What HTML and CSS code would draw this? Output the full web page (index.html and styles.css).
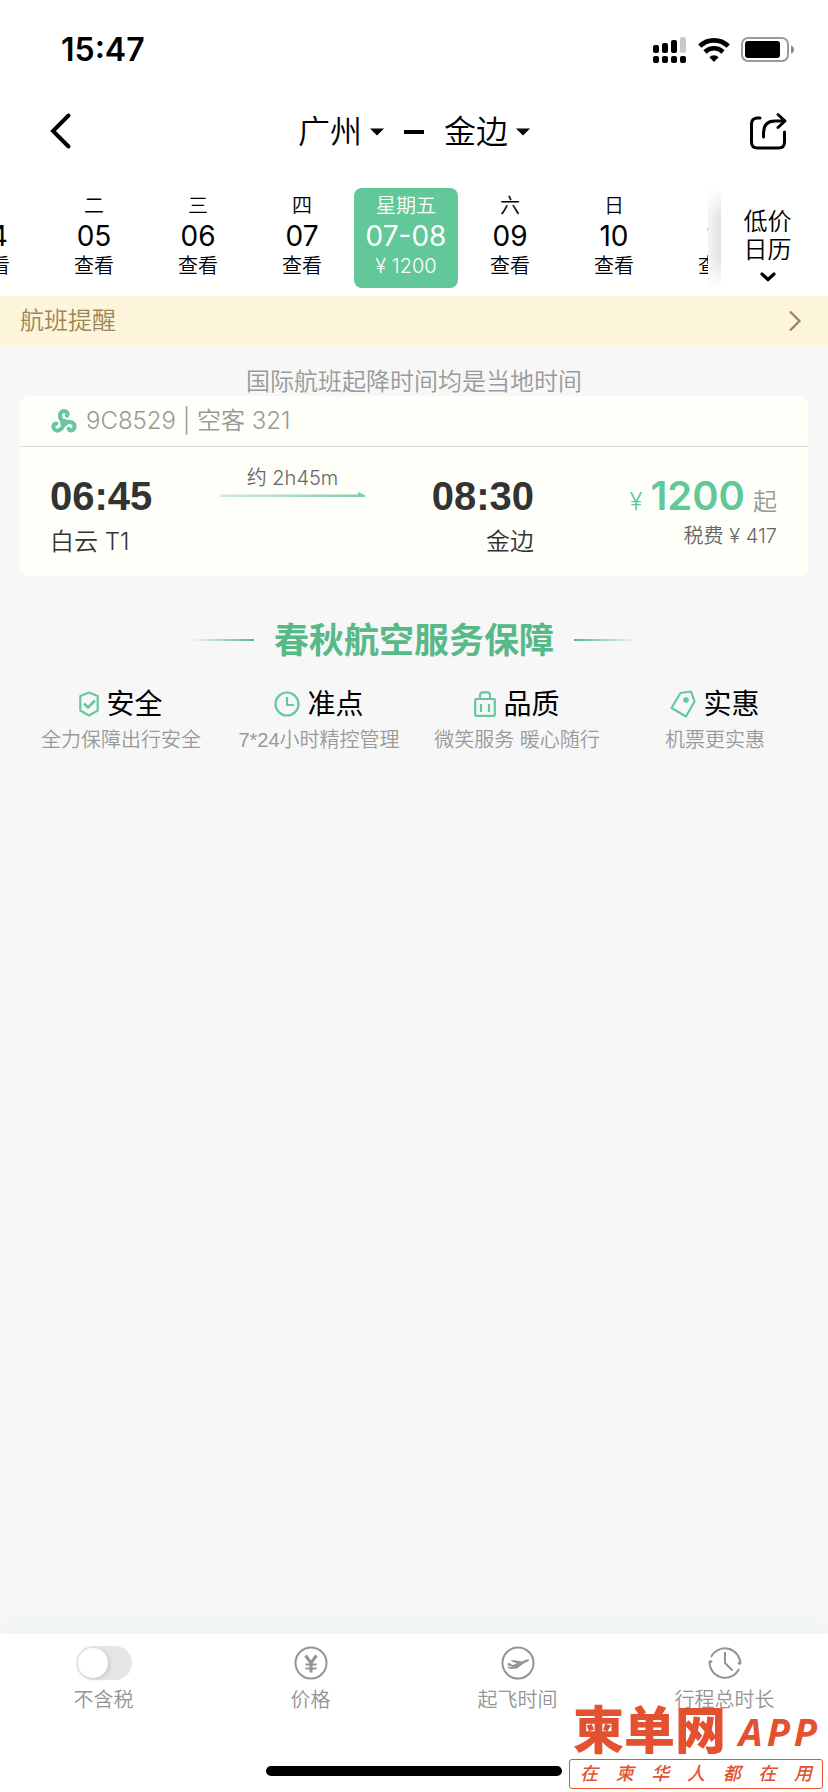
FILE: index.html
```html
<!DOCTYPE html>
<html lang="zh-CN">
<head>
<meta charset="utf-8">
<meta name="viewport" content="width=device-width, initial-scale=1">
<title>广州 - 金边</title>
<link rel="stylesheet" href="styles.css">
</head>
<body>
<div class="page">
  <div class="status">
    <span class="clock">15:47</span>
    <div class="status-icons">
      <svg width="34" height="26" viewBox="0 0 34 26">
        <rect x="0" y="8" width="6" height="8" rx="2"/><rect x="9" y="6" width="6" height="10" rx="2"/><rect x="18" y="3" width="6" height="13" rx="2"/><rect x="27" y="0" width="6" height="16" rx="2" fill="#c9c9c9"/>
        <rect x="0" y="19" width="6" height="7" rx="2"/><rect x="9" y="19" width="6" height="7" rx="2"/><rect x="18" y="19" width="6" height="7" rx="2"/><rect x="27" y="19" width="6" height="7" rx="2"/>
      </svg>
      <svg width="32" height="24" viewBox="0 0 32 24">
        <g fill="none" stroke="#000" stroke-width="4.6"><path d="M1.8 8.2a20.2 20.2 0 0 1 28.4 0"/><path d="M7 14a12.8 12.8 0 0 1 18 0"/></g>
        <path d="M16 24l-4.6-4.8a6.6 6.6 0 0 1 9.200 0z"/>
      </svg>
      <svg width="54" height="25" viewBox="0 0 54 25">
        <rect x="1" y="1" width="46" height="23" rx="6" fill="#fff" stroke="#9a9a9a" stroke-width="2"/>
        <rect x="4" y="4" width="35" height="17" rx="3"/>
        <path d="M50 8.500q3 1 3 4t-3 4z" fill="#8a8a8a"/>
      </svg>
    </div>
  </div>

  <header class="nav">
    <button class="icon-btn back" aria-label="返回">
      <svg width="21" height="36" viewBox="0 0 21 36"><path d="M18.500 2.500L3 18l15.500 15.500" fill="none" stroke="#000" stroke-width="4" stroke-linecap="round"/></svg>
    </button>
    <div class="route">
      <button class="city">广州<svg width="14" height="8" viewBox="0 0 14 8"><path d="M0 0.500h14L7 7.500z"/></svg></button>
      <span class="dash"></span>
      <button class="city">金边<svg width="14" height="8" viewBox="0 0 14 8"><path d="M0 0.500h14L7 7.500z"/></svg></button>
    </div>
    <button class="icon-btn share" aria-label="分享">
      <svg width="38" height="38" viewBox="0 0 38 38" fill="none" stroke="#000" stroke-width="3" stroke-linecap="round" stroke-linejoin="round"><path d="M11 6H8Q2.500 6.500 2.500 12v18q0 6 6 6h21q6 0 6-6V20"/><path d="M14.500 25V21Q14.500 9 26 9h9M29 2.500L36 9l-7 6.500"/></svg>
    </button>
  </header>

  <div class="dates">
    <div class="strip">
      <button class="day"><span>一</span><b>04</b><span>查看</span></button>
      <button class="day"><span>二</span><b>05</b><span>查看</span></button>
      <button class="day"><span>三</span><b>06</b><span>查看</span></button>
      <button class="day"><span>四</span><b>07</b><span>查看</span></button>
      <button class="day selected"><span>星期五</span><b>07-08</b><span>¥ 1200</span></button>
      <button class="day"><span>六</span><b>09</b><span>查看</span></button>
      <button class="day"><span>日</span><b>10</b><span>查看</span></button>
      <button class="day"><span></span><b>11</b><span>查看</span></button>
    </div>
    <div class="edge"></div>
    <button class="calendar">
      <span>低价<br>日历</span>
      <svg width="16" height="10" viewBox="0 0 16 10"><path d="M2 2l6 5.500L14 2" fill="none" stroke="#000" stroke-width="3.200" stroke-linecap="round"/></svg>
    </button>
  </div>

  <a class="alert" href="#">航班提醒
    <svg width="13" height="22" viewBox="0 0 13 22"><path d="M2 1.500l9.500 9.500L2 20.500" fill="none" stroke="#9d8454" stroke-width="2.200"/></svg>
  </a>

  <main>
    <p class="tip">国际航班起降时间均是当地时间</p>
    <article class="flight">
      <div class="flight-head">
        <svg width="24" height="24" viewBox="0 0 28 28">
          <circle cx="14" cy="16" r="4.500" fill="#69c7a0"/>
          <g fill="none" stroke="#69c7a0" stroke-width="4.800" stroke-linecap="round">
            <g id="arm"><path d="M14 15.500C8.500 12 7.500 4.500 12.500 2.700C16.500 1.600 19.300 4.600 17.500 7.800"/></g>
            <use href="#arm" transform="rotate(120 14 16)"/><use href="#arm" transform="rotate(240 14 16)"/>
          </g>
        </svg>
        <span>9C8529 | 空客 321</span>
      </div>
      <div class="flight-body">
        <div><div class="time">06:45</div><div class="airport">白云 T1</div></div>
        <div class="duration">
          <span>约 2h45m</span>
          <svg width="145" height="6" viewBox="0 0 145 6" preserveAspectRatio="none"><defs><linearGradient id="fade"><stop offset="0" stop-color="#cfeadd"/><stop offset="1" stop-color="#7fcdab"/></linearGradient></defs><path d="M0 3.500h138V1l7 3v2H0z" fill="url(#fade)"/></svg>
        </div>
        <div class="arrive"><div class="time">08:30</div><div class="airport">金边</div></div>
        <div class="price">
          <div class="fare"><span class="yen">¥</span><strong>1200</strong><span class="from">起</span></div>
          <div class="tax">税费 ¥ 417</div>
        </div>
      </div>
    </article>

    <section>
      <h2 class="promise">春秋航空服务保障</h2>
      <ul class="features">
        <li>
          <h3><svg width="20" height="26" viewBox="0 0 20 26" fill="none" stroke="#69c7a0" stroke-width="2.200" stroke-linejoin="round"><path d="M10 1.500L18.700 5v14.500L10 24.500 1.300 19.500V5z"/><path d="M5 12.500l4 4 7-7" stroke-width="2.600"/></svg>安全</h3>
          <p>全力保障出行安全</p>
        </li>
        <li>
          <h3><svg width="26" height="26" viewBox="0 0 26 26" fill="none" stroke="#69c7a0" stroke-width="2.200"><circle cx="13" cy="13" r="11.500"/><path d="M13 6v8h7"/></svg>准点</h3>
          <p>7*24小时精控管理</p>
        </li>
        <li>
          <h3><svg width="22" height="26" viewBox="0 0 22 26" fill="none" stroke="#69c7a0" stroke-width="2.200"><rect x="1.200" y="8" width="19.600" height="16.800" rx="1"/><path d="M6 8V4q0-2.700 2.700-2.700h4.600Q16 1.300 16 4v4M7 13v8M15 13v8"/></svg>品质</h3>
          <p>微笑服务 暖心随行</p>
        </li>
        <li>
          <h3><svg width="26" height="28" viewBox="0 0 26 28" fill="none" stroke="#69c7a0" stroke-width="2.200" stroke-linejoin="round"><path d="M10.500 3L21 1.500l3.500 10L16 26.500 1.500 18z"/><circle cx="16" cy="10" r="2.800" fill="#69c7a0" stroke="none"/></svg>实惠</h3>
          <p>机票更实惠</p>
        </li>
      </ul>
    </section>
  </main>

  <footer class="bottom">
    <nav class="tabs">
      <label class="tab"><input type="checkbox" class="switch"><span>不含税</span></label>
      <button class="tab">
        <svg width="34" height="34" viewBox="0 0 34 34" fill="none" stroke="#949494" stroke-width="2"><circle cx="17" cy="17" r="15.500"/><path d="M11.500 9.500L17 17l5.500-7.500M17 17v9.500" stroke-width="3"/><path d="M11.500 18.500h11M11.500 22.500h11"/></svg>
        <span>价格</span>
      </button>
      <button class="tab">
        <svg width="34" height="34" viewBox="0 0 34 34"><circle cx="17" cy="17" r="15.500" fill="none" stroke="#949494" stroke-width="2"/><path d="M6.500 17.500l2-.5 3 2 4.500-1.500L9.500 15l2-1 9.500 1.500 4.500-2q3-.8 2.500.8-.5 1.200-5.500 3.200l-6.500 5-6 .6q-3-.2-3.500-2.800l3 .9 3-.7q-4 .6-6-2z" fill="#949494"/></svg>
        <span>起飞时间</span>
      </button>
      <button class="tab">
        <svg width="34" height="34" viewBox="0 0 34 34" fill="none" stroke="#949494" stroke-width="2"><path d="M3 11A15.500 15.500 0 0 1 32.400 18M31 23A15.500 15.500 0 0 1 1.600 15"/><path d="M30 16.500l2.400 2M4 16.500l-2.400-2"/><path d="M17 6v11l7.500 7.500"/></svg>
        <span>行程总时长</span>
      </button>
    </nav>
    <div class="home"></div>
  </footer>

  <div class="mark">
    <div class="mark-top"><span class="mark-name">柬单网</span><span class="mark-app">APP</span></div>
    <div class="mark-line">在 柬 华 人 都 在 用</div>
  </div>
</div>
</body>
</html>
```

FILE: styles.css
```css
* { box-sizing: border-box; }
body, p, h2, h3, ul { margin: 0; padding: 0; }
body { background: #f7f7f7; color: #000; font: 350 20px/28px Inter, "Noto Sans CJK SC", sans-serif; }
button { border: 0; padding: 0; background: none; color: inherit; font: inherit; }
svg { display: block; flex: none; overflow: visible; }
.page { position: relative; display: flex; flex-direction: column; min-height: 100vh; overflow: hidden; }

.status { display: flex; align-items: center; justify-content: space-between; height: 96px; padding: 3px 33px 0 61px; background: #fff; }
.clock { font-size: 32px; font-weight: 600; }
.status-icons { display: flex; align-items: center; gap: 11px; }

.nav { display: grid; grid-template-columns: 1fr auto 1fr; align-items: center; height: 70px; padding: 0 41px; background: #fff; }
.back { justify-self: start; padding-left: 9px; }
.share { justify-self: end; }
.route { display: flex; align-items: center; gap: 20px; padding-top: 2px; }
.city { display: flex; align-items: center; gap: 8px; font-size: 32px; line-height: 44px; }
.dash { width: 20px; height: 4px; background: #000; }

.dates { display: flex; padding: 22px 0 8px; background: #fff; }
.strip { display: flex; flex: 1; justify-content: center; overflow: hidden; }
.day { display: flex; flex: none; flex-direction: column; align-items: center; width: 104px; min-height: 100px; padding-top: 3px; line-height: 30px; }
.day span { min-height: 30px; }
.day b { font-size: 28px; font-weight: 400; }
.selected { border-radius: 8px; background: #62c899; color: #fff; }
.edge { width: 13px; background: linear-gradient(90deg, #f4f4f4, #e2e2e2); -webkit-mask: linear-gradient(transparent, #000 30%, #000 70%, transparent); mask: linear-gradient(transparent, #000 30%, #000 70%, transparent); }
.calendar { display: flex; flex-direction: column; align-items: center; justify-content: flex-end; gap: 8px; width: 107px; padding: 0 14px 6px 0; font-size: 24px; line-height: 28px; }

.alert { display: flex; align-items: center; justify-content: space-between; height: 49px; padding: 0 27px 0 20px; background: #fcf5dc; color: #9d8454; font-size: 24px; text-decoration: none; }

main { flex: 1; }
.tip { padding-top: 23px; color: #999; font-size: 24px; text-align: center; }
.flight { margin: 0 20px; border-radius: 8px; background: #fffffa; }
.flight-head { display: flex; align-items: center; gap: 10px; height: 51px; padding-left: 32px; border-bottom: 1px solid #dededc; color: #999; font-size: 24px; }
.flight-body { display: grid; grid-template-columns: 170fr 145fr 169fr 243fr; padding: 29px 31px 20px 30px; }
.time { color: #333; font: 700 40px/40px "Liberation Sans", Arial, sans-serif; }
.airport { margin-top: 12px; color: #333; font-size: 24px; }
.arrive, .price { text-align: right; }
.duration { display: flex; flex-direction: column; align-items: center; margin-top: -11px; color: #666; line-height: 26px; }
.duration svg { width: 100%; }
.fare { display: flex; align-items: baseline; justify-content: flex-end; gap: 8px; height: 40px; color: #62c899; font-size: 24px; line-height: 40px; }
.fare strong { font-size: 40px; font-weight: 600; }
.from { color: #999; }
.tax { margin-top: 6px; color: #666; }

.promise { display: flex; align-items: center; justify-content: center; gap: 20px; margin-top: 40px; color: #58b988; font-size: 35px; font-weight: 700; line-height: 48px; }
.promise::before, .promise::after { width: 64px; height: 2px; background: linear-gradient(90deg, transparent, #58b988); content: ""; }
.promise::after { background: linear-gradient(270deg, transparent, #58b988); }
.features { display: grid; grid-template-columns: repeat(4, 1fr); margin-top: 22px; padding: 0 14px 0 22px; list-style: none; text-align: center; }
.features h3 { display: flex; align-items: center; justify-content: center; gap: 7px; font-size: 28px; font-weight: 400; line-height: 36px; }
.features p { margin-top: 4px; color: #999; font-family: "Liberation Sans", "Noto Sans CJK SC", sans-serif; white-space: nowrap; }

.bottom { display: flex; flex-direction: column; align-items: center; padding-bottom: 16px; background: #fff; box-shadow: 0 -12px 24px #eff5f3; }
.tabs { display: grid; grid-template-columns: repeat(4, 1fr); width: 100%; padding-top: 12px; color: #949494; }
.tab { display: flex; flex-direction: column; align-items: center; gap: 6px; }
.switch { display: flex; width: 56px; height: 34px; margin: 0; padding: 2px; border-radius: 17px; background: #e6e6e8; appearance: none; }
.switch::before { width: 30px; height: 30px; border-radius: 50%; background: #fff; box-shadow: 2px 1px 4px #c8c8cc; content: ""; }
.home { width: 296px; height: 10px; margin-top: 52px; border-radius: 5px; background: #000; }

.mark { position: absolute; right: 5px; bottom: 3px; width: 254px; color: #e35131; }
.mark-top { display: flex; align-items: center; justify-content: space-between; padding: 0 2px 0 4px; line-height: 56px; }
.mark-name { font-size: 51px; font-style: oblique 5deg; font-weight: 900; }
.mark-app { font-family: "Open Sans", sans-serif; font-size: 38px; font-style: italic; font-weight: 700; letter-spacing: 4px; }
.mark-line { padding: 0 10px; border: 1px solid #e35131; border-radius: 3px; background: #fff; font-size: 18px; font-style: italic; font-weight: 500; text-align-last: justify; }
```
